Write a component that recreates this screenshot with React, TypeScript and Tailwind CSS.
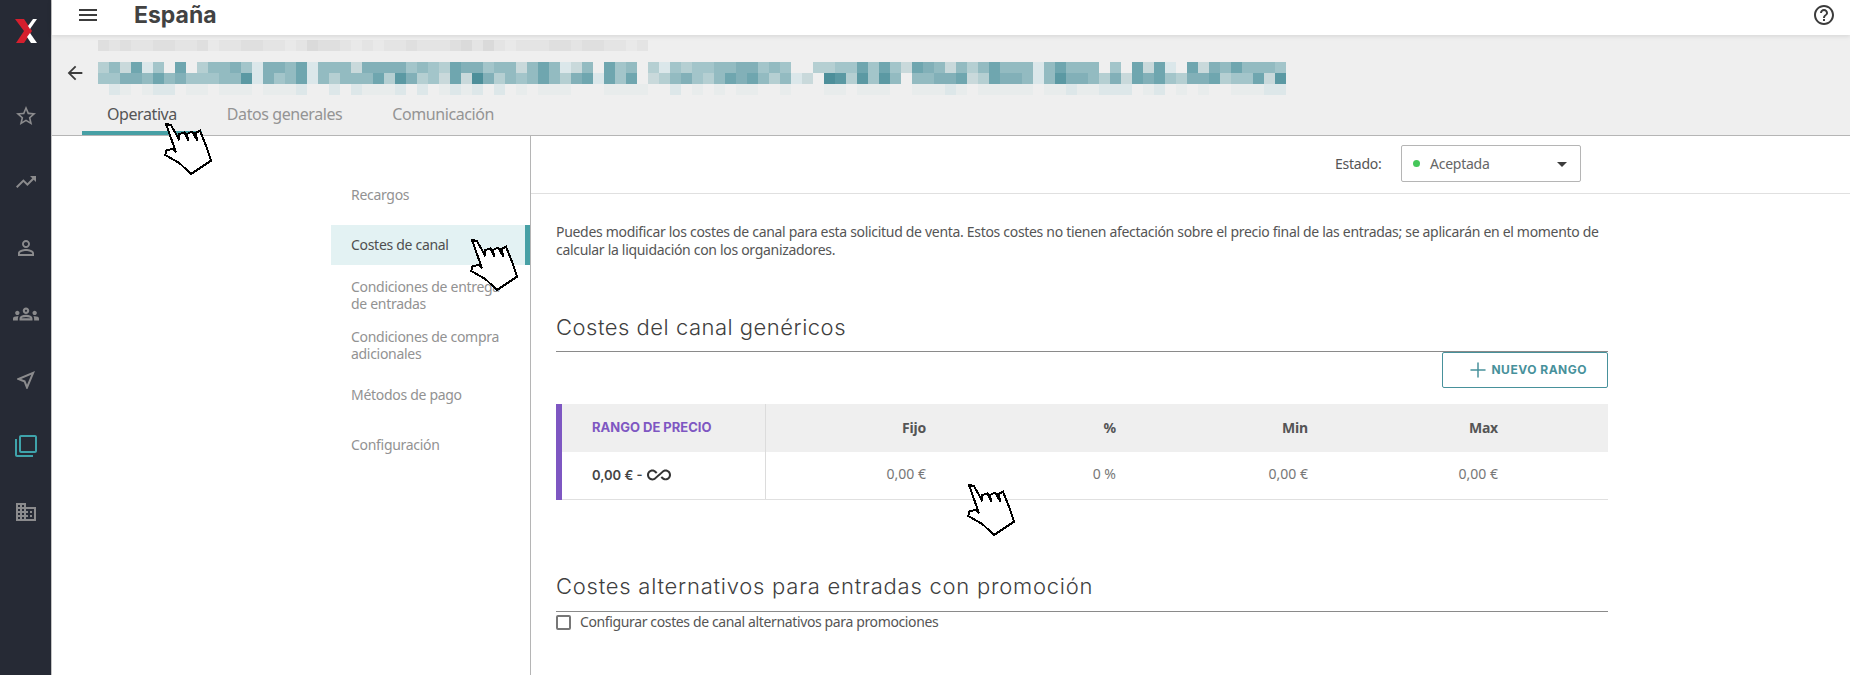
import React from 'react';
import { Plus } from 'lucide-react';

const body = 'font-["Noto_Sans",sans-serif]';
const display = 'font-["Inter",sans-serif]';

// obscured text in the reference: one char per 11px cell
const colors: Record<string, string> = {
  '0': '#efefef', '1': '#dbe7ea', '2': '#c9d9db', '3': '#b5cfd2', '4': '#a3c5ca',
  '5': '#93bbc1', '6': '#82b0b8', '7': '#6fa6af', '8': '#5b99a3', '9': '#4d8f9a',
  a: '#e8ecec', b: '#dde7e9', c: '#e9e9e9', d: '#e4e4e4', e: '#dfdfdf', f: '#dadada',
};

const titleRows = [
  '35271407035564166571555266664543766455' + '25751250745031434455664540033447474' + '27652535755515755504072710726575554',
  '44665756444558164571535557386342729635'.slice(0, 38) + '45753671747023564357675351209838485' + '05566723766515866536276743667344728',
  '0ba0abb0aa0aaa0aaab00b0baaab0b0abab0b0' + 'a0aaa000aaaa00b0a0a0aa00a000aa0aaa0' + '0aaaba0aaaaa0aabaabbb0ab0a0a00aaabb',
];
const crumbRows = ['ededdeeddecddeeddcdfeedcdcddedddefdfdcdddeedeeddcd'];

const Pixels = ({ rows }: { rows: string[] }) => (
  <svg width={rows[0].length * 11} height={rows.length * 11} shapeRendering="crispEdges" className="block">
    {rows.map((row, y) =>
      row.split('').map((c, x) => <rect key={`${x}-${y}`} x={x * 11} y={y * 11} width={11} height={11} fill={colors[c]} />)
    )}
  </svg>
);

const Icon = ({ d, size = 24, className = '' }: { d: string; size?: number; className?: string }) => (
  <svg width={size} height={size} viewBox="0 0 24 24" fill="currentColor" className={className}>
    <path d={d} />
  </svg>
);

const Hand = ({ className }: { className: string }) => (
  <svg width={60} height={60} viewBox="0 0 180 180" shapeRendering="crispEdges" className={`absolute z-20 ${className}`}>
    <path
      d="M30 15 L45 18 L68 60 L70 45 L85 40 L97 65 L92 45 L108 38 L125 65 L118 42 L132 35 L150 80 L165 125 L105 165 L70 132 L28 108 L32 93 L52 90 L60 100 Z"
      fill="#fff"
      stroke="#000"
      strokeWidth={6}
      strokeLinejoin="miter"
    />
  </svg>
);

const railIcons = [
  'M22 9.24l-7.19-.62L12 2 9.19 8.63 2 9.24l5.46 4.73L5.82 21 12 17.27 18.18 21l-1.63-7.03L22 9.24zM12 15.4l-3.76 2.27 1-4.28-3.32-2.88 4.38-.38L12 6.1l1.71 4.04 4.38.38-3.32 2.88 1 4.28L12 15.4z',
  'M16 6l2.29 2.29-4.88 4.88-4-4L2 16.59 3.41 18l6-6 4 4 6.3-6.29L22 12V6z',
  'M12 5.9c1.16 0 2.1.94 2.1 2.1s-.94 2.1-2.1 2.1S9.9 9.16 9.9 8s.94-2.1 2.1-2.1m0 9c2.97 0 6.1 1.46 6.1 2.1v1.1H5.9V17c0-.64 3.13-2.1 6.1-2.1M12 4C9.79 4 8 5.79 8 8s1.79 4 4 4 4-1.79 4-4-1.79-4-4-4zm0 9c-2.67 0-8 1.34-8 4v3h16v-3c0-2.66-5.33-4-8-4z',
  'M4,13c1.1,0,2-0.9,2-2c0-1.1-0.9-2-2-2s-2,0.9-2,2C2,12.1,2.9,13,4,13z M5.13,14.1C4.76,14.04,4.39,14,4,14 c-0.99,0-1.93,0.21-2.78,0.58C0.48,14.9,0,15.62,0,16.43V18l4.5,0v-1.61C4.5,15.56,4.73,14.78,5.13,14.1z M20,13c1.1,0,2-0.9,2-2 c0-1.1-0.9-2-2-2s-2,0.9-2,2C18,12.1,18.9,13,20,13z M24,16.43c0-0.81-0.48-1.53-1.22-1.85C21.93,14.21,20.99,14,20,14 c-0.39,0-0.76,0.04-1.13,0.1c0.4,0.68,0.63,1.46,0.63,2.29V18l4.5,0V16.43z M16.24,13.65c-1.17-0.52-2.61-0.9-4.24-0.9 c-1.63,0-3.07,0.39-4.24,0.9C6.68,14.13,6,15.21,6,16.39V18h12v-1.61C18,15.21,17.32,14.13,16.24,13.65z M8.07,16 c0.09-0.23,0.13-0.39,0.91-0.69c0.97-0.38,1.99-0.56,3.02-0.56s2.05,0.18,3.02,0.56c0.77,0.3,0.81,0.46,0.91,0.69H8.07z M12,8 c0.55,0,1,0.45,1,1s-0.45,1-1,1s-1-0.45-1-1S11.45,8,12,8 M12,6c-1.66,0-3,1.34-3,3c0,1.66,1.34,3,3,3s3-1.34,3-3 C15,7.34,13.66,6,12,6L12,6z',
  'M17.27 6.73l-4.24 10.13-1.32-3.42-.32-.83-.82-.32-3.43-1.33 10.13-4.23M21 3L3 10.53v.98l6.84 2.65L12.48 21h.98L21 3z',
  'M3 5H1v16c0 1.1.9 2 2 2h16v-2H3V5zm18-4H7c-1.1 0-2 .9-2 2v14c0 1.1.9 2 2 2h14c1.1 0 2-.9 2-2V3c0-1.1-.9-2-2-2zm0 16H7V3h14v14z',
  'M12 7V3H2v18h20V7H12zM6 19H4v-2h2v2zm0-4H4v-2h2v2zm0-4H4V9h2v2zm0-4H4V5h2v2zm4 12H8v-2h2v2zm0-4H8v-2h2v2zm0-4H8V9h2v2zm0-4H8V5h2v2zm10 12h-8v-2h2v-2h-2v-2h2v-2h-2V9h8v10zm-2-8h-2v2h2v-2zm0 4h-2v2h2v-2z',
];

const navItems = [
  { label: 'Recargos' },
  { label: 'Costes de canal', active: true },
  { label: 'Condiciones de entrega de entradas' },
  { label: 'Condiciones de compra adicionales' },
  { label: 'Métodos de pago' },
  { label: 'Configuración' },
];

const Sidebar = () => (
  <aside className="w-[52px] shrink-0 bg-[#262a35] border-r border-[#c4c4c4] flex flex-col items-center">
    <div className="h-[83px] w-full pt-[18px] pl-[15px]">
      <svg width={23} height={26} viewBox="0 0 23 26">
        <polygon points="0,1 9,1 17,13 9,25 1,25 9,13" fill="#d51f2e" />
        <polygon points="13,8 18,1 22,1 15,11" fill="#fff" />
        <polygon points="15,15 22,25 16,25 12,19" fill="#fff" />
      </svg>
    </div>
    {railIcons.map((d, i) => (
      <div key={i} className="h-[66px] flex items-center justify-center">
        <Icon d={d} size={i === 3 ? 26 : 24} className={i === 5 ? 'text-[#3fa3ab]' : 'text-[#8b8b8d]'} />
      </div>
    ))}
  </aside>
);

const TopBar = () => (
  <header className="h-[35px] shrink-0 bg-white relative z-10 shadow-[0_1px_5px_rgba(0,0,0,0.12)] flex items-center">
    <Icon d="M3 18h18v-2H3v2zm0-5h18v-2H3v2zm0-7v2h18V6H3z" className="ml-[24px] text-[#3c3c3c] -mt-[5px]" />
    <h1 className={`${display} ml-[34px] -mt-[4px] text-[23px] font-bold text-[#424242]`}>España</h1>
    <Icon d="M11 18h2v-2h-2v2zm1-16C6.48 2 2 6.48 2 12s4.48 10 10 10 10-4.48 10-10S17.52 2 12 2zm0 18c-4.41 0-8-3.59-8-8s3.59-8 8-8 8 3.59 8 8-3.59 8-8 8zm0-14c-2.21 0-4 1.79-4 4h2c0-1.1.9-2 2-2s2 .9 2 2c0 2-3 1.75-3 5h2c0-2.25 3-2.5 3-5 0-2.21-1.79-4-4-4z" className="ml-auto mr-[14px] -mt-[5px] text-[#3c3c3c]" />
  </header>
);

const SubHeader = () => (
  <section className="h-[101px] shrink-0 bg-[#efefef] border-b border-[#b5b5b5] flex flex-col">
    <div className="pl-[46px] pt-[5px]">
      <Pixels rows={crumbRows} />
    </div>
    <div className="flex items-start pl-[12px] mt-[11px]">
      <Icon d="M20 11H7.83l5.59-5.59L12 4l-8 8 8 8 1.41-1.41L7.83 13H20v-2z" size={22} className="text-[#3c3c3c] mr-[12px]" />
      <Pixels rows={titleRows} />
    </div>
    <nav className="flex ml-[30px] h-[40px] mt-auto">
      {['Operativa', 'Datos generales', 'Comunicación'].map((tab, i) => (
        <div
          key={tab}
          className={`px-[25px] pt-[1px] flex items-center text-[16px] tracking-[-0.42px] border-b-4 ${i === 0 ? 'border-[#47a0a5] text-[#555]' : 'border-transparent text-[#949494]'}`}
        >
          {tab}
        </div>
      ))}
    </nav>
  </section>
);

const SideNav = () => (
  <div className="w-[479px] shrink-0 border-r border-[#b5b5b5] pl-[279px] pt-[39px]">
    {navItems.map(item => (
      <div
        key={item.label}
        className={`h-[40px] mb-[10px] pl-[20px] pr-[18px] pb-[1px] flex items-center text-[14px] leading-[17px] tracking-[-0.3px] ${item.active ? 'bg-[#e3f2f3] text-[#4f4f4f] border-r-[5px] border-[#47a0a5]' : 'text-[#929292]'}`}
      >
        <span>{item.label}</span>
      </div>
    ))}
  </div>
);

const columns = [
  { head: 'Fijo', value: '0,00 €', w: 'w-[160px]' },
  { head: '%', value: '0 %', w: 'w-[190px]' },
  { head: 'Min', value: '0,00 €', w: 'w-[192px]' },
  { head: 'Max', value: '0,00 €', w: 'w-[190px]' },
];

const PriceTable = () => (
  <div className="mt-[16px] border-l-[6px] border-[#7e57c2]">
    <div className="flex h-[48px] bg-[#efefef] items-center">
      <div className={`${display} w-[204px] h-full flex items-center pl-[30px] border-r border-[#dcdcdc] text-[13px] font-bold text-[#7e57c2]`}>
        RANGO DE PRECIO
      </div>
      {columns.map(c => (
        <div key={c.head} className={`${c.w} -mt-[2px] text-right text-[14px] font-bold text-[#555] tracking-[-0.2px]`}>{c.head}</div>
      ))}
    </div>
    <div className="flex h-[48px] items-center border-b border-[#e0e0e0]">
      <div className={`${display} w-[204px] h-full flex items-center gap-[4px] pl-[30px] pt-[1px] border-r border-[#dcdcdc] text-[13px] font-semibold text-[#444]`}>
        <span>0,00 € -</span>
        <Icon d="M18.6 6.62c-1.44 0-2.8.56-3.77 1.53L12 10.66 10.48 12h.01L7.8 14.39c-.64.64-1.49.99-2.4.99-1.87 0-3.39-1.51-3.39-3.38S3.53 8.62 5.4 8.62c.91 0 1.76.35 2.44 1.03l1.13 1 1.51-1.34L9.22 8.2C8.2 7.18 6.84 6.62 5.4 6.62 2.42 6.62 0 9.04 0 12s2.42 5.38 5.4 5.38c1.44 0 2.8-.56 3.77-1.53l2.83-2.5.01.01L13.52 12h-.01l2.69-2.39c.64-.64 1.49-.99 2.4-.99 1.87 0 3.39 1.51 3.39 3.38s-1.52 3.38-3.39 3.38c-.9 0-1.76-.35-2.44-1.03l-1.14-1.01-1.51 1.34 1.27 1.12c1.02 1.01 2.37 1.57 3.82 1.57 2.98 0 5.4-2.41 5.4-5.38s-2.42-5.37-5.4-5.37z" className="text-[#333] -mt-[2px]" />
      </div>
      {columns.map(c => (
        <div key={c.head} className={`${c.w} -mt-[5px] text-right text-[14px] text-[#777]`}>{c.value}</div>
      ))}
    </div>
  </div>
);

const Content = () => (
  <div className="flex-1 min-w-0 flex flex-col">
    <div className="h-[58px] shrink-0 border-b border-[#e0e0e0] flex items-center pb-[2px] pl-[804px]">
      <span className="text-[14px] text-[#555] w-[66px] tracking-[-0.25px]">Estado:</span>
      <div className="w-[180px] h-[37px] border border-[#b5b5b5] rounded-[2px] flex items-center pl-[11px] pr-[6px]">
        <span className="w-[7px] h-[7px] rounded-full bg-[#45c75a] mr-[10px]" />
        <span className="text-[14px] text-[#666] tracking-[-0.25px]">Aceptada</span>
        <Icon d="M7 10l5 5 5-5z" className="ml-auto text-[#3c3c3c]" />
      </div>
    </div>
    <div className="pl-[25px] w-[1077px]">
      <p className="mt-[29px] w-[1060px] text-[14px] leading-[18px] text-[#555] tracking-[-0.31px]">
        Puedes modificar los costes de canal para esta solicitud de venta. Estos costes no tienen afectación sobre el precio final de las entradas; se aplicarán en el momento de calcular la liquidación con los organizadores.
      </p>
      <h2 className={`${display} mt-[53px] h-[40px] text-[22px] leading-[30px] font-light text-[#3f3f3f] tracking-[0.5px] border-b border-[#8a8a8a]`}>
        Costes del canal genéricos
      </h2>
      <div className="flex justify-end">
        <button className={`${display} w-[166px] h-[36px] border border-[#47919b] rounded-[2px] flex items-center justify-end gap-[1px] pr-[20px] text-[12px] font-bold tracking-[0.5px] text-[#47919b]`}>
          <Plus size={24} strokeWidth={1.5} />
          NUEVO RANGO
        </button>
      </div>
      <PriceTable />
      <h2 className={`${display} mt-[71px] h-[41px] text-[22px] leading-[30px] font-light text-[#3f3f3f] tracking-[0.75px] border-b border-[#8a8a8a]`}>
        Costes alternativos para entradas con promoción
      </h2>
      <label className="mt-[1px] flex items-center gap-[9px] text-[14px] leading-[18px] text-[#555] tracking-[-0.37px]">
        <input type="checkbox" className="appearance-none w-[15px] h-[15px] border-2 border-[#777] rounded-[2px]" />
        Configurar costes de canal alternativos para promociones
      </label>
    </div>
  </div>
);

export default function App() {
  return (
    <div className={`${body} relative flex h-[675px] w-[1850px] overflow-hidden bg-white`}>
      <Sidebar />
      <main className="flex-1 min-w-0 flex flex-col">
        <TopBar />
        <SubHeader />
        <div className="flex flex-1 min-h-0">
          <SideNav />
          <Content />
        </div>
      </main>
      <Hand className="left-[156px] top-[119px]" />
      <Hand className="left-[462px] top-[235px]" />
      <Hand className="left-[959px] top-[480px]" />
    </div>
  );
}
